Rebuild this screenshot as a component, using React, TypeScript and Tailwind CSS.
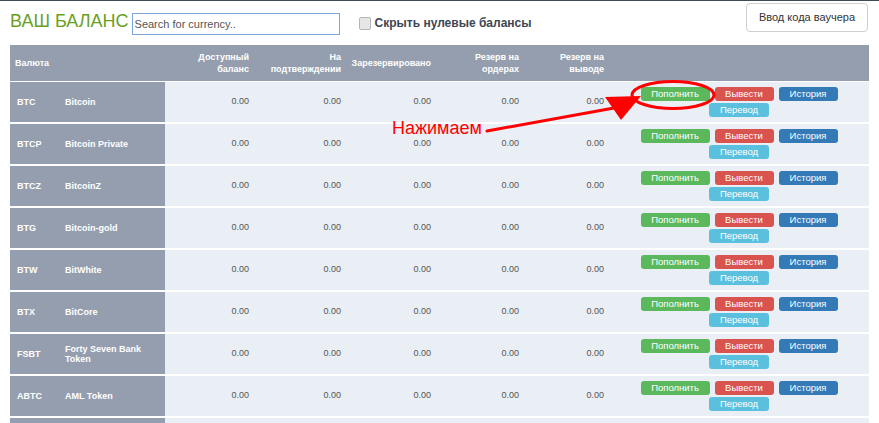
import React from "react";

interface Currency {
  code: string;
  name: string;
}

const currencies: Currency[] = [
  { code: "BTC", name: "Bitcoin" },
  { code: "BTCP", name: "Bitcoin Private" },
  { code: "BTCZ", name: "BitcoinZ" },
  { code: "BTG", name: "Bitcoin-gold" },
  { code: "BTW", name: "BitWhite" },
  { code: "BTX", name: "BitCore" },
  { code: "FSBT", name: "Forty Seven Bank Token" },
  { code: "ABTC", name: "AML Token" },
];

const valueCols = ["w-[84px]", "w-[92px]", "w-[90px]", "w-[88px]", "w-[85px]"];

function ActionButtons() {
  const btn = "h-[14px] rounded-[3px] text-white text-[9.5px] leading-[14px] text-center";
  return (
    <div className="flex flex-col items-center gap-[2px] pl-[5px]">
      <div className="flex gap-[5px]">
        <button className={`${btn} w-[69px] bg-[#5cb85c]`}>Пополнить</button>
        <button className={`${btn} w-[59px] bg-[#d9534f]`}>Вывести</button>
        <button className={`${btn} w-[59px] bg-[#337ab7]`}>История</button>
      </div>
      <button className={`${btn} w-[60px] bg-[#5bc0de]`}>Перевод</button>
    </div>
  );
}

export default function App() {
  return (
    <div className="relative w-[879px] h-[423px] overflow-hidden bg-white border-t border-[#434a57] font-['Liberation_Sans',Arial,sans-serif]">
      {/* top bar */}
      <div className="flex items-start h-[44px] pl-[10px] pr-[11px]">
        <h1 className="mt-[10px] text-[18px] leading-[20px] text-[#6a9f1e]">ВАШ БАЛАНС</h1>
        <input
          placeholder="Search for currency.."
          className="ml-[3px] mt-[12px] w-[208px] h-[22px] border border-[#7ea6d6] px-[2px] text-[11px] text-[#555] placeholder:text-[#555] outline-none"
        />
        <label className="ml-[19px] mt-[13px] flex items-center gap-[4px] text-[12px] font-bold text-[#3e4652]">
          <span className="w-[12px] h-[13px] rounded-[2px] border border-[#b5b5b5] bg-[#e6e6e6]" />
          Скрыть нулевые балансы
        </label>
        <button className="ml-auto mt-[2px] w-[122px] h-[29px] rounded-[4px] border border-[#cfcfcf] bg-white text-[11px] text-[#333]">
          Ввод кода ваучера
        </button>
      </div>

      {/* table */}
      <div className="ml-[10px] w-[859px] text-[9px]">
        <div className="flex h-[36px] mb-[1px] bg-[#959eae] text-white font-bold leading-[12px] items-center">
          <div className="w-[155px] pl-[5px]">Валюта</div>
          <div className="w-[84px] text-right">Доступный<br />баланс</div>
          <div className="w-[92px] text-right">На<br />подтверждении</div>
          <div className="w-[90px] text-right">Зарезервировано</div>
          <div className="w-[88px] text-right">Резерв на<br />ордерах</div>
          <div className="w-[85px] text-right">Резерв на<br />выводе</div>
        </div>
        {currencies.map((c) => (
          <div key={c.code} className="flex h-[40px] mb-[2px] bg-[#eaeff6] items-stretch">
            <div className="flex w-[155px] bg-[#959eae] text-white font-bold items-center leading-[10px]">
              <div className="w-[55px] pl-[7px]">{c.code}</div>
              <div className="w-[90px]">{c.name}</div>
            </div>
            {valueCols.map((w, i) => (
              <div key={i} className={`flex items-center justify-end text-[#555] ${w}`}>
                0.00
              </div>
            ))}
            <div className="flex-1 flex items-center justify-center">
              <ActionButtons />
            </div>
          </div>
        ))}
        {/* next row, cut off by the window */}
        <div className="flex h-[40px] bg-[#eaeff6]">
          <div className="w-[155px] bg-[#959eae]" />
        </div>
      </div>

      {/* annotation overlay */}
      <svg className="absolute left-0 top-0 pointer-events-none" width="879" height="423">
        <ellipse cx="673" cy="94" rx="41" ry="13.5" fill="none" stroke="#ff0000" strokeWidth="3" />
        <line x1="487" y1="130" x2="614" y2="107" stroke="#ff0000" strokeWidth="3" strokeLinecap="round" />
        <polygon points="641,95 605,96 621,119" fill="#ff0000" />
      </svg>
      <div className="absolute left-[392px] top-[116px] text-[18px] leading-[22px] text-[#ff0000]">Нажимаем</div>
    </div>
  );
}
